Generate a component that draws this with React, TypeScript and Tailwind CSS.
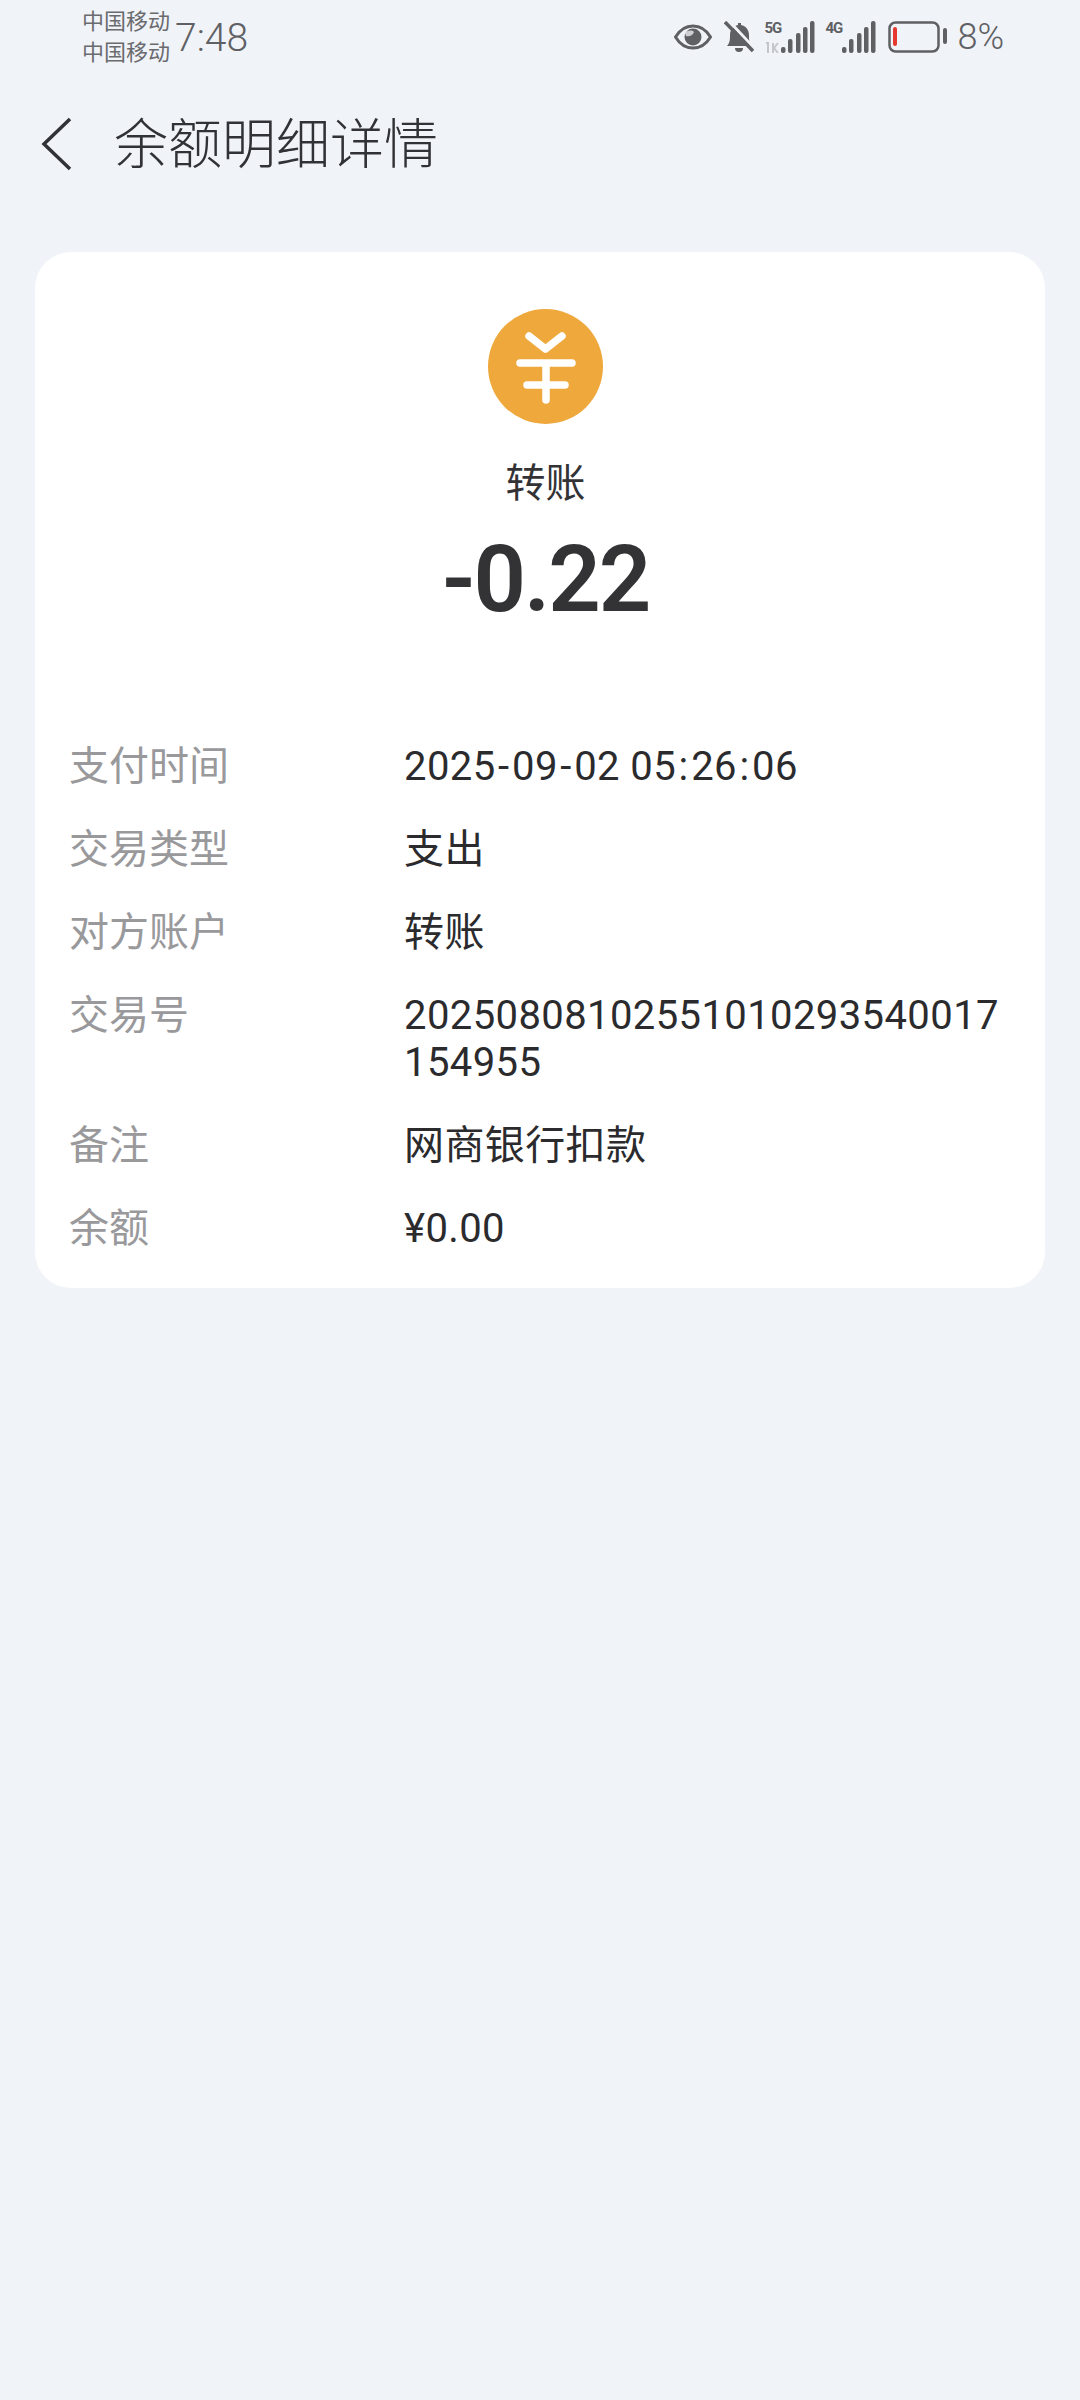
import React from "react";

const cjk = "font-['Noto_Sans_CJK_SC','Noto_Sans',sans-serif]";

const Sep = ({ children }: { children: string }) => <span className="px-[2.5px]">{children}</span>;

const rows: { label: string; value: React.ReactNode; h: string }[] = [
  {
    label: "支付时间",
    value: (
      <>
        2025<Sep>-</Sep>09<Sep>-</Sep>02 05<Sep>:</Sep>26<Sep>:</Sep>06
      </>
    ),
    h: "h-[83px]",
  },
  { label: "交易类型", value: "支出", h: "h-[83px]" },
  { label: "对方账户", value: "转账", h: "h-[83px]" },
  { label: "交易号", value: "20250808102551010293540017154955", h: "h-[130px]" },
  { label: "备注", value: "网商银行扣款", h: "h-[83px]" },
  { label: "余额", value: "¥0.00", h: "h-[83px]" },
];

const Bars = () => (
  <>
    <rect x="17" y="26" width="4.5" height="6" rx="2" fill="#5f6063" />
    <rect x="24" y="18" width="4.5" height="14" rx="2" fill="#5f6063" />
    <rect x="32" y="12" width="4.5" height="20" rx="2" fill="#5f6063" />
    <rect x="39" y="6" width="4.5" height="26" rx="2" fill="#5f6063" />
    <rect x="46" y="0" width="4.5" height="32" rx="2" fill="#5f6063" />
  </>
);

const StatusIcons = () => (
  <div className="flex h-[32px] items-center text-[#5f6063]">
    {/* eye */}
    <svg width="38" height="26" viewBox="0 0 38 26">
      <path d="M1.5 13C6 5.5 12 2 19 2s13 3.5 17.5 11C32 20.5 26 24 19 24S6 20.5 1.5 13Z" fill="none" stroke="#5f6063" strokeWidth="3" />
      <circle cx="19" cy="13" r="8.5" fill="#5f6063" />
      <path d="M11 9c3-3 7-3 9-1-1 3-4 5-8 4Z" fill="#f0f3f8" opacity="0.75" />
    </svg>
    {/* muted bell */}
    <svg className="ml-[12px]" width="30" height="32" viewBox="0 0 30 32">
      <path d="M3 25c3-3 3-7 3-11 0-5 3-9 8-10v-2h3v2c5 1 8 5 8 10 0 4 0 8 3 11Z" fill="#5f6063" />
      <path d="M11 27h8a4 4 0 0 1-8 0Z" fill="#5f6063" />
      <path d="M4 -1 30 27" stroke="#f0f3f8" strokeWidth="3" />
      <path d="M1 1l28 29" stroke="#5f6063" strokeWidth="3.5" />
    </svg>
    {/* 5G signal */}
    <div className="relative ml-[10px] h-[32px] w-[50px]">
      <span className="absolute left-0 top-[-1px] font-['Roboto',sans-serif] text-[15px] leading-[16px] font-bold tracking-[-1px]">5G</span>
      <svg className="absolute left-0 top-0" width="51" height="32" viewBox="0 0 51 32">
        <path d="M2 22h2v10M9 22v10M14 22l-4 5 4 5" stroke="#c4c6ca" strokeWidth="2" fill="none" />
        <Bars />
      </svg>
    </div>
    {/* 4G signal */}
    <div className="relative ml-[11px] h-[32px] w-[50px]">
      <span className="absolute left-0 top-[-1px] font-['Roboto',sans-serif] text-[15px] leading-[16px] font-bold tracking-[-1px]">4G</span>
      <svg className="absolute left-0 top-0" width="51" height="32" viewBox="0 0 51 32">
        <Bars />
      </svg>
    </div>
    {/* battery */}
    <svg className="ml-[13px]" width="59" height="32" viewBox="0 0 59 32">
      <rect x="1.5" y="1.5" width="49" height="29" rx="6" fill="none" stroke="#5f6063" strokeWidth="2.5" />
      <rect x="5" y="6" width="4" height="19" rx="2" fill="#e5392f" />
      <rect x="55" y="7" width="4" height="16" rx="2" fill="#5f6063" />
    </svg>
    <span className="ml-[10px] font-['Roboto',sans-serif] text-[36px] leading-none font-light">8%</span>
  </div>
);

export default function App() {
  return (
    <div className={`flex h-[2400px] w-[1080px] flex-col bg-[#f0f3f8] ${cjk}`}>
      {/* status bar */}
      <div className="flex h-[76px] items-start justify-between pl-[82px] pr-[76px]">
        <div className="flex items-center pt-[4px]">
          <div className="flex flex-col text-[22px] leading-[31px] text-[#6a6b6e]">
            <span>中国移动</span>
            <span>中国移动</span>
          </div>
          <span className="ml-[5px] pt-[6px] font-['Roboto',sans-serif] text-[39px] leading-none font-light text-[#5f6063]">7:48</span>
        </div>
        <div className="pt-[21px]">
          <StatusIcons />
        </div>
      </div>

      {/* header */}
      <div className="flex h-[136px] items-center pl-[41px]">
        <svg width="32" height="54" viewBox="0 0 32 54">
          <path d="M29 2 3 27l26 25" fill="none" stroke="#303236" strokeWidth="3.5" />
        </svg>
        <h1 className="ml-[41px] pb-[6px] text-[54px] leading-none font-light text-[#303236]">余额明细详情</h1>
      </div>

      {/* card */}
      <div className="mx-[35px] mt-[40px] h-[1036px] w-[1010px] rounded-[36px] bg-white">
        <div className="flex flex-col items-center pt-[57px] pl-[11px]">
          <svg width="115" height="115" viewBox="0 0 115 115">
            <circle cx="57.5" cy="57.5" r="57.5" fill="#efa83c" />
            <path d="M41 27 57.5 40 74 27" fill="none" stroke="#fff" strokeWidth="7.5" strokeLinecap="round" strokeLinejoin="round" />
            <path d="M32 54h52M39 76h38M58 54v37" fill="none" stroke="#fff" strokeWidth="7.5" strokeLinecap="round" />
          </svg>
          <div className="mt-[32px] text-[40px] leading-[48px] text-[#333336]">转账</div>
          <div className="mt-[26px] font-['Roboto',sans-serif] text-[92px] leading-[100px] font-semibold tracking-[-2px] text-[#333336]">-0.22</div>
        </div>

        <div className="mt-[98px] flex flex-col pl-[34px] pr-[40px]">
          {rows.map((row) => (
            <div key={row.label} className={`flex ${row.h}`}>
              <div className="w-[335px] shrink-0 pt-[12px] text-[40px] leading-[46px] text-[#99999c]">{row.label}</div>
              <div className="min-w-0 break-all pt-[15px] font-['Roboto','Noto_Sans_CJK_SC',sans-serif] text-[40px] leading-[47px] tracking-[0.4px] text-[#2b2b2e]">{row.value}</div>
            </div>
          ))}
        </div>
      </div>
    </div>
  );
}
